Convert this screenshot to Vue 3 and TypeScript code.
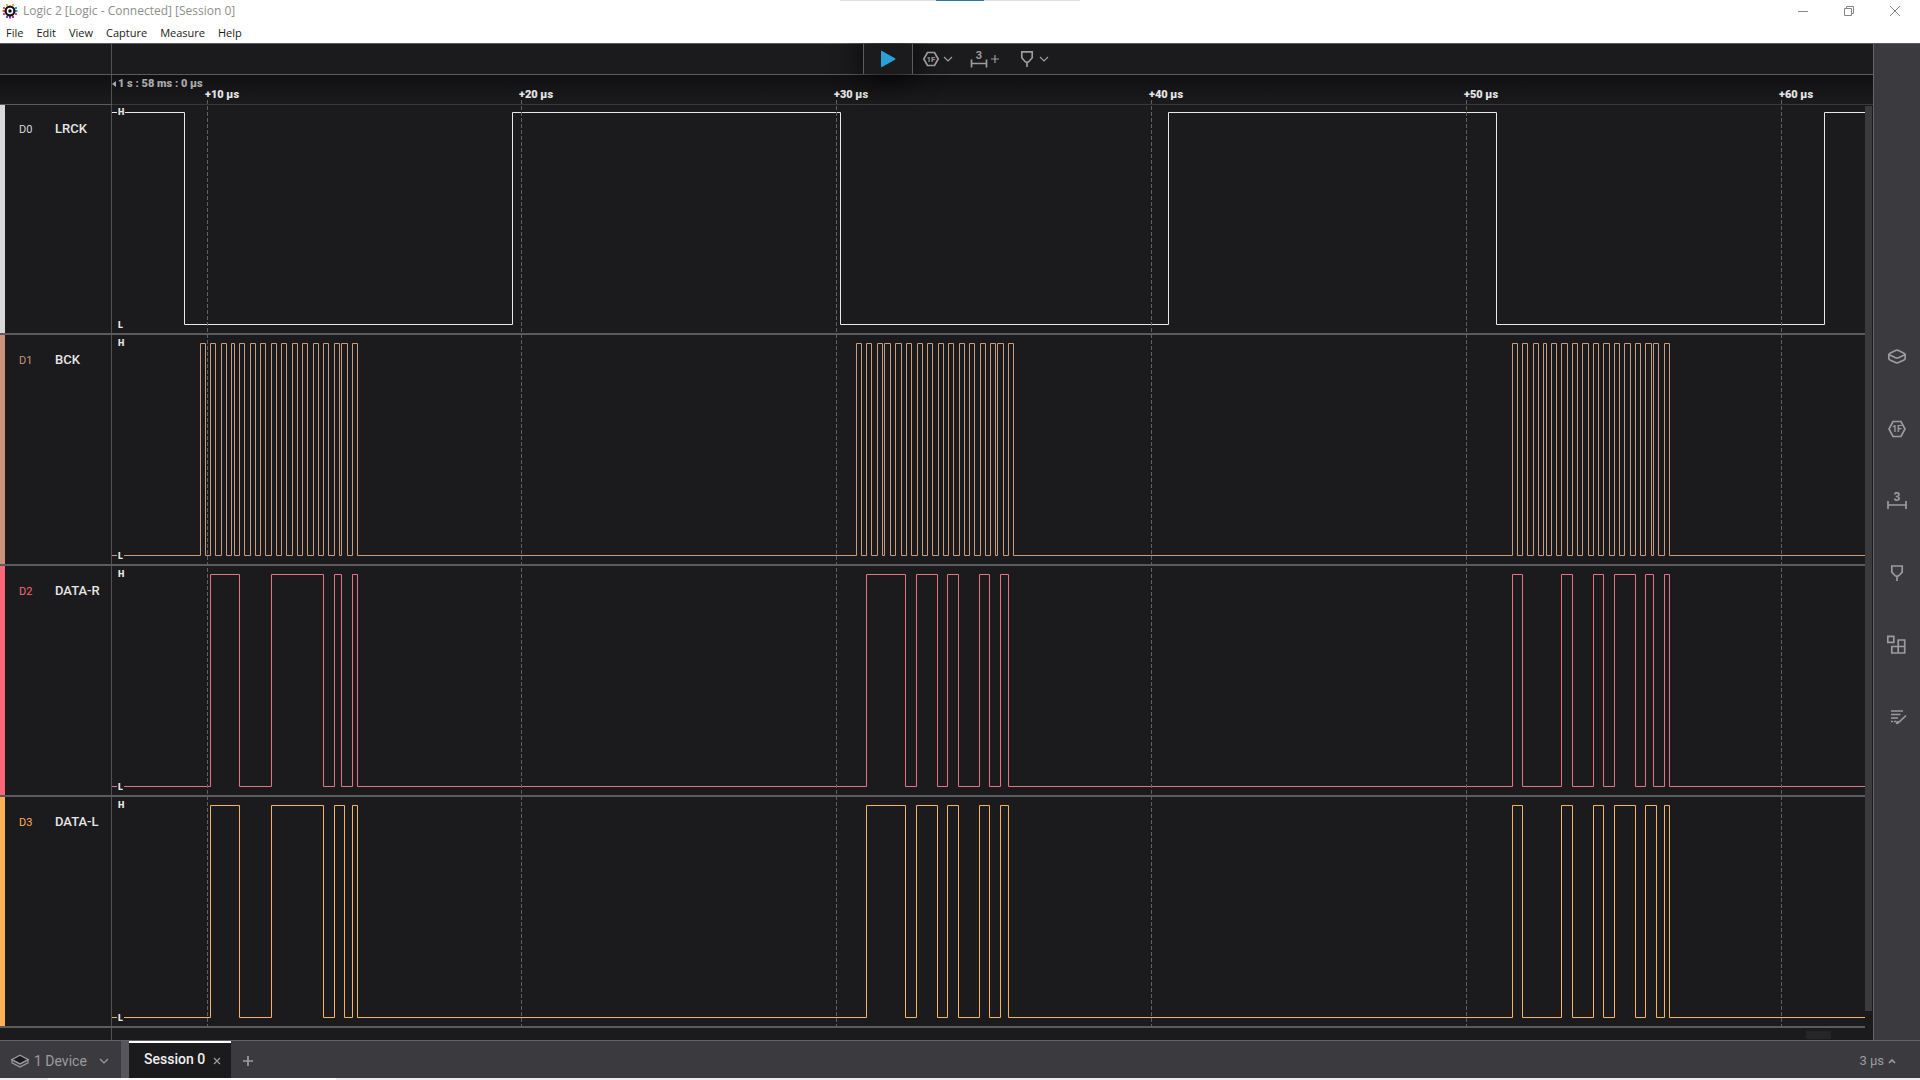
<script setup lang="ts">
import { ref } from 'vue'

interface Channel {
  id: string
  name: string
  accent: string
  trace: string
  startHigh: boolean
  edges: number[]
}

/* Time axis units: the visible window runs from VIEW_START over VIEW_SPAN. */
const VIEW_START = 112
const VIEW_SPAN = 1753
const VIEW_END = VIEW_START + VIEW_SPAN
const HIGH = 8.5
const LOW = 220.5

const ticks = [
  { label: '+10 µs', at: 207 },
  { label: '+20 µs', at: 521 },
  { label: '+30 µs', at: 836 },
  { label: '+40 µs', at: 1151 },
  { label: '+50 µs', at: 1466 },
  { label: '+60 µs', at: 1781 },
]

const clockEdges = [
  200, 205, 210, 215, 221, 226, 231, 234, 239, 244, 250, 255, 260, 265, 271, 276,
  281, 286, 292, 297, 302, 307, 313, 318, 323, 328, 334, 339, 341, 347, 352, 357,
  856, 861, 866, 871, 877, 882, 884, 890, 895, 901, 906, 911, 917, 922, 927, 932,
  938, 943, 948, 953, 959, 964, 969, 974, 980, 985, 990, 995, 997, 1003, 1008, 1013,
  1512, 1517, 1522, 1527, 1533, 1538, 1543, 1546, 1551, 1556, 1561, 1567, 1572, 1577, 1582, 1588,
  1593, 1598, 1603, 1609, 1614, 1619, 1624, 1630, 1635, 1640, 1645, 1651, 1653, 1658, 1664, 1669,
]

const channels: Channel[] = [
  { id: 'D0', name: 'LRCK', accent: '#d8d8d8', trace: '#e4eae8', startHigh: true, edges: [184, 512, 840, 1168, 1496, 1824] },
  { id: 'D1', name: 'BCK', accent: '#c8937a', trace: '#c79c80', startHigh: false, edges: clockEdges },
  {
    id: 'D2', name: 'DATA-R', accent: '#ff6678', trace: '#e77384', startHigh: false,
    edges: [210, 239, 271, 323, 334, 341, 352, 357, 866, 905, 916, 937, 947, 958, 979, 989, 1000, 1008,
      1512, 1522, 1561, 1572, 1593, 1603, 1614, 1635, 1645, 1653, 1664, 1669],
  },
  {
    id: 'D3', name: 'DATA-L', accent: '#ffb057', trace: '#f4b464', startHigh: false,
    edges: [210, 239, 271, 323, 334, 344, 352, 357, 866, 905, 916, 937, 947, 958, 979, 989, 1000, 1008,
      1512, 1522, 1561, 1572, 1593, 1603, 1614, 1635, 1645, 1656, 1664, 1669],
  },
]

function tracePath(ch: Channel): string {
  let high = ch.startHigh
  let d = `M${VIEW_START} ${high ? HIGH : LOW}`
  for (const x of ch.edges) {
    high = !high
    d += `H${x + 0.5}V${high ? HIGH : LOW}`
  }
  return d + `H${VIEW_END}`
}

const percent = (at: number): string => `${((at - VIEW_START) / VIEW_SPAN) * 100}%`

const menus = ['File', 'Edit', 'View', 'Capture', 'Measure', 'Help']
const panels = ['Device', 'Analyzers', 'Measurements', 'Timing markers', 'Extensions', 'Notes']
const session = ref('Session 0')
</script>

<template>
  <div class="app">
    <header class="titlebar">
      <span class="peek"><i></i></span>
      <div class="title-row">
        <svg class="logo" width="16" height="16" viewBox="0 0 16 16">
          <g stroke-width="2" fill="none">
            <path stroke="#2f9bd8" d="M13 5h2M13 8h2.500" />
            <path stroke="#e8663c" d="M1 5h2M.5 8H3" />
            <path stroke="#8a3fc0" d="M5 13v2M8 13v2.500M11 13v2" />
            <path stroke="#e9b13a" d="M5 1v2M11 1v2" />
            <path stroke="#d84a7a" d="M1 11h2M13 11h2" />
          </g>
          <circle cx="8" cy="8" r="5.500" fill="#15151a" />
          <circle cx="8" cy="8" r="2.500" fill="none" stroke="#fff" stroke-width="1.500" />
        </svg>
        <span class="title">Logic 2 [Logic - Connected] [Session 0]</span>
        <div class="win-controls">
          <button type="button" aria-label="Minimize"><svg width="10" height="10"><path d="M0 5.500h10" /></svg></button>
          <button type="button" aria-label="Restore"><svg width="10" height="10"><path d="M.5 2.500h7v7h-7zM2.500 2.500v-2h7v7h-2" /></svg></button>
          <button type="button" aria-label="Close"><svg width="10" height="10"><path d="M0 0l10 10M10 0L0 10" /></svg></button>
        </div>
      </div>
      <nav class="menu">
        <button v-for="m in menus" :key="m" type="button">{{ m }}</button>
      </nav>
    </header>

    <div class="work">
      <main class="main">
        <div class="toolbar">
          <div class="gutter"></div>
          <div class="tools">
            <div class="tool-group">
              <button type="button" class="play" aria-label="Start capture">
                <svg width="16" height="18" viewBox="0 0 16 18"><path d="M1 1.500Q1 .5 2 1L15 8.300Q16 9 15 9.700L2 17Q1 17.500 1 16.500z" fill="#2a9fd8" /></svg>
              </button>
              <button type="button" class="tool t-analyzer" aria-label="Add analyzer">
                <svg class="ico" width="18" height="18" viewBox="0 0 18 18">
                  <path d="M5.500 2.500h7L16.200 9l-3.700 6.500h-7L1.800 9z" />
                  <text x="9" y="12" font-size="8" text-anchor="middle">1F</text>
                </svg>
                <svg class="ico thin" width="10" height="6" viewBox="0 0 10 6"><path d="M1 1l4 4 4-4" /></svg>
              </button>
              <button type="button" class="tool t-measure" aria-label="Add measurement">
                <svg class="ico" width="18" height="18" viewBox="0 0 18 18">
                  <path d="M1.500 9.500v8M16.500 9.500v8M1.500 13.500h15" />
                  <text x="9" y="9" font-size="11" text-anchor="middle">3</text>
                </svg>
                <svg class="ico thin" width="8" height="8" viewBox="0 0 8 8"><path d="M4 0v8M0 4h8" /></svg>
              </button>
              <button type="button" class="tool t-marker" aria-label="Add timing marker">
                <svg class="ico" width="18" height="18" viewBox="0 0 18 18"><path d="M3.800 1.800h10.400v6L10.500 12h-3L3.800 7.800zM9 12v5" /></svg>
                <svg class="ico thin" width="10" height="6" viewBox="0 0 10 6"><path d="M1 1l4 4 4-4" /></svg>
              </button>
            </div>
          </div>
        </div>

        <div class="ruler">
          <div class="gutter"></div>
          <div class="scale">
            <span class="origin"><i></i>1 s : 58 ms : 0 µs</span>
            <span v-for="t in ticks" :key="t.label" class="tick" :style="{ left: percent(t.at) }">{{ t.label }}</span>
          </div>
        </div>

        <div class="capture">
          <div class="rows">
            <div class="grid">
              <i v-for="t in ticks" :key="t.label" :style="{ left: percent(t.at) }"></i>
            </div>
            <section v-for="ch in channels" :key="ch.id" class="row">
              <div class="label" :style="{ borderLeftColor: ch.accent }">
                <span class="id" :style="{ color: ch.accent }">{{ ch.id }}</span>
                <span class="name">{{ ch.name }}</span>
              </div>
              <div class="plot">
                <svg class="trace" :viewBox="`${VIEW_START} 0 ${VIEW_SPAN} 229`" preserveAspectRatio="none">
                  <path :d="tracePath(ch)" :stroke="ch.trace" vector-effect="non-scaling-stroke" />
                </svg>
                <span class="level high">H</span>
                <span class="level low">L</span>
              </div>
            </section>
          </div>
          <div class="vscroll"><i></i></div>
        </div>
        <div class="hscroll">
          <div class="gutter"></div>
          <i></i>
        </div>
      </main>

      <aside class="sidebar">
        <button v-for="(p, i) in panels" :key="p" type="button" :aria-label="p">
          <svg class="ico" width="20" height="20" viewBox="0 0 20 20">
            <path v-if="i === 0" d="M1.800 7.500Q1.800 6.700 3 6.200L8.500 3.500Q10 2.800 11.500 3.500L17 6.200Q18.200 6.700 18.200 7.500V11.500Q18.200 12.300 17 12.900L11.500 15.600Q10 16.300 8.500 15.600L3 12.900Q1.800 12.300 1.800 11.500zM2.200 7.800L8.500 10.800Q10 11.500 11.500 10.800L17.800 7.800" />
            <template v-else-if="i === 1">
              <path d="M6 2.500h8L18 10l-4 7.500H6L2 10z" />
              <text x="10" y="13" font-size="9" text-anchor="middle">1F</text>
            </template>
            <template v-else-if="i === 2">
              <path d="M1 10v8M19 10v8M1 14h18" />
              <text x="10" y="10" font-size="12" text-anchor="middle">3</text>
            </template>
            <path v-else-if="i === 3" d="M4.800 3h10.400v6.200L11.500 13h-3L4.800 9.200zM10 13v5" />
            <path v-else-if="i === 4" d="M.8 1.300h6v6h-6zM11.200 5h6.500v6.500h-6.500zM4.800 11.500h6.400v6.500H4.800zM11.200 11.500h6.500v6.500h-6.500z" />
            <path v-else d="M4 4h12M4 7.500h9.500M4 11h7M4 14.500h2M7 14.500h2M9.500 17l1-3M11.500 15.500L19 8.500M10.500 16.500L17.500 10" />
          </svg>
        </button>
      </aside>
    </div>

    <footer class="status">
      <button type="button" class="device">
        <svg class="ico thin" width="18" height="14" viewBox="0 0 18 14">
          <path d="M1 5.800L9 10l8-4.200v3L9 13 1 8.800z" />
          <path d="M1 5.500L9 1.200l8 4.300-8 4.200z" fill="#1b1b1d" />
        </svg>
        <span>1 Device</span>
        <svg class="ico thin chev" width="10" height="6" viewBox="0 0 10 6"><path d="M1 1l4 4 4-4" /></svg>
      </button>
      <div class="tab">
        <button type="button" class="tab-name">{{ session }}</button>
        <button type="button" class="tab-close" aria-label="Close session">
          <svg class="ico thin" width="8" height="8" viewBox="0 0 8 8"><path d="M1 1l6 6M7 1L1 7" /></svg>
        </button>
      </div>
      <button type="button" class="add" aria-label="New session">
        <svg class="ico" width="12" height="12" viewBox="0 0 12 12"><path d="M6 1v10M1 6h10" /></svg>
      </button>
      <button type="button" class="zoom">
        <span>3 µs</span>
        <svg class="ico" width="8" height="6" viewBox="0 0 8 6"><path d="M1 5l3-3 3 3" /></svg>
      </button>
    </footer>
    <div class="taskbar-edge"><i></i></div>
  </div>
</template>

<style>
body {
  background: #1b1b1d;
}
</style>

<style scoped>
.app {
  display: flex;
  flex-direction: column;
  min-height: 100vh;
  background: #1b1b1d;
  color: #e6e6e6;
  font-family: Roboto, "Liberation Sans", sans-serif;
}
button {
  border: 0;
  padding: 0;
  margin: 0;
  background: none;
  color: inherit;
  font: inherit;
}
svg {
  display: block;
  flex: none;
}
.ico {
  fill: none;
  stroke: #9c9c9f;
  stroke-width: 1.7;
}
.ico.thin {
  stroke-width: 1.2;
}
.ico text {
  fill: #9c9c9f;
  stroke: none;
  font-weight: 700;
}

/* Title bar */
.titlebar {
  position: relative;
  z-index: 4;
  height: 43px;
  background: #fff;
  color: #1a1a1a;
  font: 11px/22px "Open Sans", "Noto Sans", sans-serif;
}
.peek {
  position: absolute;
  top: 0;
  left: 50%;
  display: flex;
  justify-content: center;
  width: 240px;
  height: 1px;
  margin-left: -120px;
  background: #dedede;
}
.peek i {
  width: 48px;
  background: #2b7a9c;
}
.title-row {
  display: flex;
  align-items: center;
  height: 22px;
  padding: 0 2px;
}
.title {
  flex: 1;
  margin-left: 5px;
  color: #8e8e8e;
  font-size: 12px;
  line-height: 22px;
}
.win-controls {
  display: flex;
}
.win-controls button {
  display: flex;
  justify-content: center;
  align-items: center;
  width: 46px;
  height: 20px;
}
.win-controls path {
  fill: none;
  stroke: #868686;
}
.menu {
  display: flex;
  gap: 13px;
  padding: 0 6px;
}

/* Work area */
.work {
  display: flex;
  flex: 1;
  border-top: 1px solid #5c5c5f;
}
.main {
  display: flex;
  flex: 1;
  flex-direction: column;
  min-width: 0;
}
.gutter {
  box-sizing: border-box;
  width: 112px;
  flex: none;
  border-right: 1px solid #515155;
}
.toolbar {
  display: flex;
  height: 30px;
  border-bottom: 1px solid #5c5c5f;
}
.tools {
  display: flex;
  flex: 1;
  justify-content: center;
}
.tool-group {
  display: flex;
  width: 260px;
}
.play {
  position: relative;
  z-index: 2;
  display: flex;
  justify-content: center;
  align-items: center;
  width: 50px;
  border: solid #5c5c5f;
  border-width: 0 1px;
  background: #1b1b1d;
  box-shadow: 0 0 30px #000;
}
.tool {
  position: relative;
  z-index: 3;
  display: flex;
  align-items: center;
}
.t-analyzer {
  gap: 3px;
  margin-left: 9px;
}
.t-measure {
  gap: 3px;
  margin-left: 17px;
}
.t-marker {
  gap: 3px;
  margin-left: 19px;
}

.ruler {
  position: relative;
  z-index: 1;
  display: flex;
  height: 29px;
  background: linear-gradient(#101012, #1b1b1d);
  box-shadow: 0 1px 0 #39393b;
  font-size: 11px;
  font-weight: 900;
  line-height: 18px;
  white-space: nowrap;
}
.ruler .gutter {
  box-shadow: 0 1px 0 #5c5c5f;
}
.scale {
  position: relative;
  flex: 1;
  margin-right: 8px;
}
.origin {
  display: flex;
  align-items: center;
  color: #a9a9aa;
}
.origin i {
  margin-right: 2px;
  border: 3px solid transparent;
  border-right: 4px solid #a9a9aa;
  border-left: 0;
}
.tick {
  position: absolute;
  top: 11px;
  margin-left: -2px;
}

.capture {
  display: flex;
  flex: 1;
}
.rows {
  position: relative;
  display: flex;
  flex: 1;
  flex-direction: column;
}
.grid {
  position: absolute;
  top: 0;
  right: 0;
  bottom: 0;
  left: 112px;
  pointer-events: none;
}
.grid i {
  position: absolute;
  z-index: 1;
  top: -4px;
  bottom: 0;
  width: 1px;
  background: repeating-linear-gradient(#5f5f62 0 4px, transparent 4px 6px);
}
.row {
  display: flex;
  flex: 1;
  min-height: 80px;
  border-bottom: 2px solid #5b5b5f;
}
.label {
  box-sizing: border-box;
  display: flex;
  align-items: flex-start;
  width: 112px;
  padding: 16px 0 0 14px;
  border-right: 1px solid #515155;
  border-left: 5px solid;
}
.id {
  width: 36px;
  font-size: 11px;
  line-height: 20px;
}
.name {
  font-size: 13px;
  font-weight: 500;
  line-height: 18px;
}
.plot {
  position: relative;
  flex: 1;
}
.trace {
  position: absolute;
  width: 100%;
  height: 100%;
}
.trace path {
  fill: none;
  stroke-width: 1;
}
.level {
  position: absolute;
  left: 5px;
  padding: 0 1px;
  background: #1b1b1d;
  font-size: 9px;
  font-weight: 900;
  line-height: 8px;
}
.high {
  top: 4px;
}
.low {
  bottom: 4px;
}
.vscroll {
  display: flex;
  width: 8px;
}
.vscroll i {
  width: 7px;
  margin: 2px 0 17px;
  background: #3b3b3d;
}
.hscroll {
  display: flex;
  justify-content: space-between;
  height: 12px;
}
.hscroll i {
  width: 25px;
  height: 8px;
  margin: 3px 42px 0 0;
  background: #262628;
}

.sidebar {
  display: flex;
  flex-direction: column;
  justify-content: center;
  width: 46px;
  padding-bottom: 10px;
  border-left: 1px solid #66666a;
  background: #3b3a3f;
}
.sidebar button {
  display: flex;
  justify-content: center;
  align-items: center;
  height: 72px;
}

/* Status bar */
.status {
  display: flex;
  height: 37px;
  border-top: 1px solid #626266;
  background: #3b3a3f;
  color: #9c9c9f;
  font-size: 14px;
}
.device {
  display: flex;
  align-items: center;
  width: 129px;
  padding: 2px 0 0 11px;
  border-right: 8px solid #56565c;
}
.device span {
  margin-left: 5px;
}
.chev {
  margin-left: 12px;
}
.tab {
  display: flex;
  align-items: center;
  gap: 8px;
  padding: 0 10px 0 15px;
  border-top: 2px solid #fff;
  background: #1b1b1d;
  color: #f0f0f0;
}
.tab-name {
  font-weight: 500;
  padding-bottom: 4px;
}
.add {
  margin-left: 11px;
  padding-top: 2px;
}
.zoom {
  display: flex;
  align-items: center;
  gap: 4px;
  margin-left: auto;
  padding: 2px 24px 0 0;
  font-size: 13px;
}
.taskbar-edge {
  display: flex;
  height: 2px;
  background: #ececec;
}
.taskbar-edge i {
  width: 288px;
  margin-left: 48px;
  background: #fff;
}
</style>
